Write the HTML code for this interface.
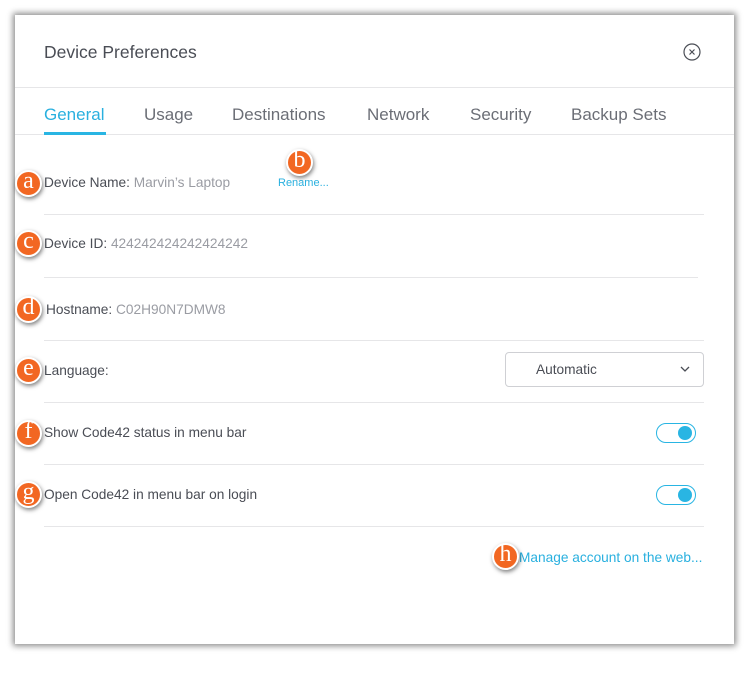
<!DOCTYPE html>
<html><head><style>
body{margin:0;width:749px;height:680px;background:#fff;font-family:"Liberation Sans",sans-serif;position:relative;overflow:hidden}
.dlg{position:absolute;left:15px;top:15px;width:719px;height:629px;background:#fff;box-shadow:0 0 6px 2px rgba(0,0,0,.45)}
.a{position:absolute;white-space:nowrap}
.title{left:44px;top:42px;font-size:17.5px;color:#4a4d55}
.tab{top:105px;font-size:17px;color:#6b6e76}
.hl{position:absolute;height:1px;background:#e6e6e8}
.lbl{font-size:13.7px;color:#4a4d55}
.val{color:#9a9ca3}
.b{position:absolute;width:23px;height:23px;border-radius:50%;background:#f26722;border:2px solid #fff;box-shadow:1px 2px 4px rgba(0,0,0,.5);color:#fff;font-family:"Liberation Serif",serif;font-size:24px;line-height:18px;text-align:center}
.tog{position:absolute;width:38px;height:18px;border:1.5px solid #29b5e3;border-radius:11px}
.tog::after{content:"";position:absolute;right:3px;top:2px;width:14px;height:14px;border-radius:50%;background:#29b5e3}
</style></head><body>
<div class="dlg"></div>
<div class="a title">Device Preferences</div>
<svg class="a" style="left:683px;top:43px" width="18" height="18" viewBox="0 0 18 18"><circle cx="9" cy="9" r="8" fill="none" stroke="#4a4d55" stroke-width="1.2"/><path d="M6.5 6.5l5 5M11.5 6.5l-5 5" stroke="#4a4d55" stroke-width="1.2"/></svg>
<div class="hl" style="left:15px;width:719px;top:87px"></div>
<div class="a tab" style="left:44px;color:#29b0df">General</div>
<div class="a tab" style="left:144px">Usage</div>
<div class="a tab" style="left:232px">Destinations</div>
<div class="a tab" style="left:367px">Network</div>
<div class="a tab" style="left:470px">Security</div>
<div class="a tab" style="left:571px">Backup Sets</div>
<div class="hl" style="left:15px;width:719px;top:134px"></div>
<div class="a" style="left:44px;top:132px;width:62px;height:3px;background:#29b5e3"></div>

<div class="a lbl" style="left:44px;top:175px">Device Name: <span class="val">Marvin’s Laptop</span></div>
<div class="a" style="left:278px;top:177px;font-size:11px;color:#29b0df">Rename...</div>
<div class="hl" style="left:44px;width:660px;top:214px"></div>
<div class="a lbl" style="left:44px;top:236px">Device ID: <span class="val">424242424242424242</span></div>
<div class="hl" style="left:44px;width:654px;top:277px"></div>
<div class="a lbl" style="left:46px;top:302px">Hostname: <span class="val">C02H90N7DMW8</span></div>
<div class="hl" style="left:44px;width:660px;top:340px"></div>
<div class="a lbl" style="left:44px;top:363px">Language:</div>
<div class="a" style="left:505px;top:352px;width:197px;height:33px;border:1px solid #cfd0d4;border-radius:4px"></div>
<div class="a lbl" style="left:536px;top:362px">Automatic</div>
<svg class="a" style="left:680px;top:366px" width="10" height="6"><path d="M1 1l4 4 4-4" fill="none" stroke="#4a4d55" stroke-width="1.3"/></svg>
<div class="hl" style="left:44px;width:660px;top:402px"></div>
<div class="a lbl" style="left:44px;top:425px">Show Code42 status in menu bar</div>
<div class="tog" style="left:656px;top:423px"></div>
<div class="hl" style="left:44px;width:660px;top:464px"></div>
<div class="a lbl" style="left:44px;top:487px">Open Code42 in menu bar on login</div>
<div class="tog" style="left:656px;top:485px"></div>
<div class="hl" style="left:44px;width:660px;top:526px"></div>
<div class="a" style="left:519px;top:550px;font-size:13.7px;color:#29b0df">Manage account on the web...</div>

<div class="b" style="left:15px;top:170px">a</div>
<div class="b" style="left:286px;top:149px">b</div>
<div class="b" style="left:15px;top:230px">c</div>
<div class="b" style="left:15px;top:296px">d</div>
<div class="b" style="left:15px;top:357px">e</div>
<div class="b" style="left:15px;top:420px">f</div>
<div class="b" style="left:15px;top:481px">g</div>
<div class="b" style="left:492px;top:543px">h</div>
</body></html>
